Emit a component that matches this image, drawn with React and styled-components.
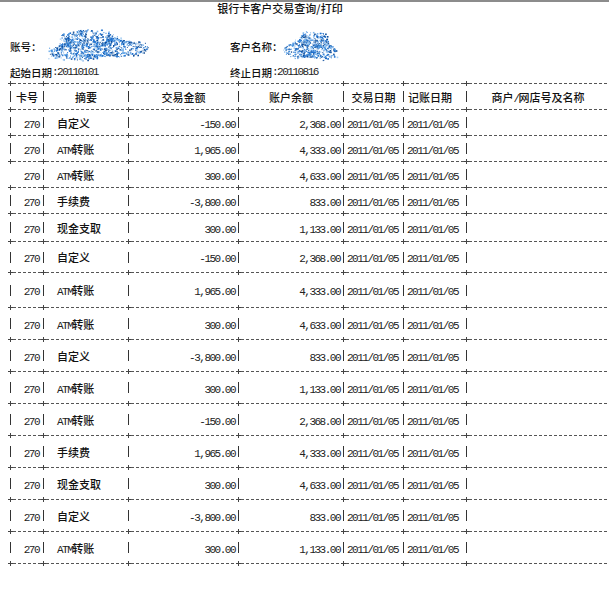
import React, { useMemo } from 'react';
import styled, { createGlobalStyle } from 'styled-components';

const GlobalStyle = createGlobalStyle`
  html, body {
    margin: 0;
    padding: 0;
    background: #fff;
  }
  body {
    font-family: "Noto Sans CJK SC", "Liberation Sans", sans-serif;
    color: #111;
    overflow: hidden;
  }
`;

// column edges: 10, 43, 128, 238, 343, 403, 466
const COLUMNS = '33px 85px 110px 105px 60px 63px 1fr';

const Page = styled.div`
  width: 609px;
  height: 600px;
  box-sizing: border-box;
  border-top: 2px solid #8c8c8c;
  overflow: hidden;
`;

const Title = styled.h1`
  margin: 0;
  width: 560px;
  height: 27px;
  font-size: 11px;
  line-height: 12px;
  font-weight: 500;
  text-align: center;
  color: #111;
`;

const InfoGrid = styled.div`
  display: grid;
  grid-template-columns: 220px 1fr;
  grid-template-rows: 34px 18px;
  padding-left: 10px;
  font-size: 10.5px;
  font-weight: 500;
`;

const InfoItem = styled.div`
  display: flex;
  align-items: center;
  white-space: nowrap;
`;

const BlobSvg = styled.svg`
  display: block;
  flex: none;
  margin-left: ${p => p.$ml || 0}px;
`;

const Num = styled.span`
  font-family: "Liberation Mono", monospace;
  font-size: 11px;
  font-weight: normal;
  letter-spacing: -1.5px;
  color: #222;
`;

const Table = styled.div`
  padding-left: 10px;
`;

const Rule = styled.div`
  display: grid;
  grid-template-columns: ${COLUMNS};
  height: 5px;
`;

const RuleSeg = styled.div`
  display: flex;
  align-items: center;
`;

const Plus = styled.span`
  flex: none;
  width: 5px;
  height: 5px;
  margin-left: -2px;
  background:
    linear-gradient(#444, #444) center / 5px 1px no-repeat,
    linear-gradient(#444, #444) center / 1px 5px no-repeat;
`;

const Dash = styled.span`
  flex: 1;
  height: 1px;
  background: repeating-linear-gradient(to right, #555 0 3px, transparent 3px 5px);
`;

const Row = styled.div`
  display: grid;
  grid-template-columns: ${COLUMNS};
  height: ${p => p.$h}px;
  font-size: 11px;
  font-weight: 500;
`;

const Cell = styled.div`
  display: flex;
  align-items: center;
  min-width: 0;
  white-space: nowrap;

  &::before {
    content: '';
    flex: none;
    width: 1px;
    height: 11px;
    background: ${p => (p.$bare ? 'transparent' : '#333')};
  }
`;

const Value = styled.span`
  flex: 1;
  min-width: 0;
  text-align: ${p => p.$align || 'left'};
  padding-left: ${p => p.$pl || 0}px;
  padding-right: ${p => p.$pr || 0}px;
`;

const ASCII = /^[\x20-\x7e]+$/;
const mixed = text =>
  text
    .split(/([\x20-\x7e]+)/)
    .filter(Boolean)
    .map((part, i) => (ASCII.test(part) ? <Num key={i}>{part}</Num> : part));

const Scribble = ({ width, height, count, seed }) => {
  const dots = useMemo(() => {
    let s = seed;
    const rnd = () => {
      s = (s * 16807) % 2147483647;
      return (s - 1) / 2147483646;
    };
    const colors = ['#1c6fcf', '#1c6fcf', '#3d8fe0', '#7ab4ec', '#0b4c9c', '#a9d0f3', '#2a5f9e'];
    const out = [];
    const cx = width / 2;
    const cy = height / 2;
    for (let i = 0; i < count; i++) {
      const a = rnd() * Math.PI * 2;
      const wobble = 0.85 + 0.2 * Math.sin(a * 3 + seed);
      const r = Math.sqrt(rnd()) * wobble * (rnd() < 0.15 ? 1.12 : 1);
      out.push({
        x: cx + Math.cos(a) * r * (cx - 1),
        y: cy + Math.sin(a) * r * (cy - 1),
        c: colors[Math.floor(rnd() * colors.length)],
        s: rnd() < 0.3 ? 1.6 : 1,
      });
    }
    return out;
  }, [width, height, count, seed]);

  return (
    <BlobSvg width={width} height={height} $ml={-1}>
      {dots.map((d, i) => (
        <rect key={i} x={d.x.toFixed(1)} y={d.y.toFixed(1)} width={d.s} height={d.s} fill={d.c} />
      ))}
    </BlobSvg>
  );
};

const Separator = () => (
  <Rule>
    {Array.from({ length: 7 }).map((_, i) => (
      <RuleSeg key={i}>
        <Plus />
        <Dash />
      </RuleSeg>
    ))}
  </Rule>
);

const HEADERS = [
  { text: '卡号', align: 'center' },
  { text: '摘要', align: 'center' },
  { text: '交易金额', align: 'center' },
  { text: '账户余额', align: 'center' },
  { text: '交易日期', align: 'center' },
  { text: '记账日期', align: 'left', pl: 4 },
  { text: '商户/网店号及名称', align: 'center' },
];

// [摘要, 交易金额, 账户余额, row height, no leading bar]
const ROWS = [
  ['自定义', '-150.00', '2,368.00', 21],
  ['ATM转账', '1,965.00', '4,333.00', 21],
  ['ATM转账', '300.00', '4,633.00', 21, true],
  ['手续费', '-3,800.00', '833.00', 21],
  ['现金支取', '300.00', '1,133.00', 23],
  ['自定义', '-150.00', '2,368.00', 26],
  ['ATM转账', '1,965.00', '4,333.00', 30],
  ['ATM转账', '300.00', '4,633.00', 27],
  ['自定义', '-3,800.00', '833.00', 27],
  ['ATM转账', '300.00', '1,133.00', 27],
  ['ATM转账', '-150.00', '2,368.00', 27],
  ['手续费', '1,965.00', '4,333.00', 27],
  ['现金支取', '300.00', '4,633.00', 27],
  ['自定义', '-3,800.00', '833.00', 27],
  ['ATM转账', '300.00', '1,133.00', 27],
];

const App = () => (
  <Page>
    <GlobalStyle />
    <Title>银行卡客户交易查询/打印</Title>

    <InfoGrid>
      <InfoItem>
        账号：
        <Scribble width={108} height={34} count={1100} seed={7} />
      </InfoItem>
      <InfoItem>
        客户名称：
        <Scribble width={58} height={33} count={620} seed={31} />
      </InfoItem>
      <InfoItem>{mixed('起始日期:20110101')}</InfoItem>
      <InfoItem>{mixed('终止日期:20110816')}</InfoItem>
    </InfoGrid>

    <Table>
      <Separator />
      <Row $h={21}>
        {HEADERS.map(h => (
          <Cell key={h.text}>
            <Value $align={h.align} $pl={h.pl}>{mixed(h.text)}</Value>
          </Cell>
        ))}
      </Row>
      <Separator />
      {ROWS.map(([summary, amount, balance, h, bare], i) => (
        <React.Fragment key={i}>
          <Row $h={h}>
            <Cell $bare={bare}>
              <Value $align="right" $pr={4}><Num>270</Num></Value>
            </Cell>
            <Cell>
              <Value $pl={13}>{mixed(summary)}</Value>
            </Cell>
            <Cell>
              <Value $align="right" $pr={3}><Num>{amount}</Num></Value>
            </Cell>
            <Cell>
              <Value $align="right" $pr={3}><Num>{balance}</Num></Value>
            </Cell>
            <Cell>
              <Value $pl={3}><Num>2011/01/05</Num></Value>
            </Cell>
            <Cell>
              <Value $pl={3}><Num>2011/01/05</Num></Value>
            </Cell>
            <Cell />
          </Row>
          <Separator />
        </React.Fragment>
      ))}
    </Table>
  </Page>
);

export default App;
